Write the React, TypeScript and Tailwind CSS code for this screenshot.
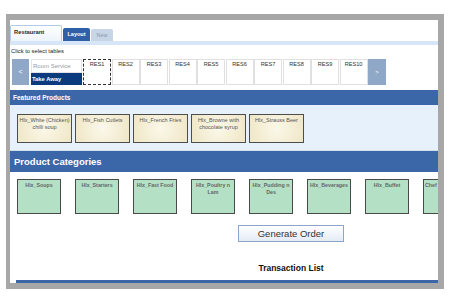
const tables = ["RES1", "RES2", "RES3", "RES4", "RES5", "RES6", "RES7", "RES8", "RES9", "RES10"];

const featured = [
  "Hlx_White (Chicken) chilli soup",
  "Hlx_Fish Cutlets",
  "Hlx_French Fries",
  "Hlx_Browne with chocolate syrup",
  "Hlx_Strauss Beer",
];

const categories = [
  "Hlx_Soups",
  "Hlx_Starters",
  "Hlx_Fast Food",
  "Hlx_Poultry n Lam",
  "Hlx_Pudding n Des",
  "Hlx_Beverages",
  "Hlx_Buffet",
];

export default function App() {
  return (
    <div className="h-[300px] w-[450px] overflow-hidden bg-white pl-[6px] pt-[14px] font-['Liberation_Sans',Arial,sans-serif]">
      <div className="flex h-[275px] w-[438px] flex-col overflow-hidden border-b-[6px] border-l-[4px] border-r-[6px] border-t-[6px] border-[#a7a7a7] bg-white">
        {/* Tabs */}
        <div className="flex h-[21px] shrink-0 items-end">
          <div className="h-[16px] w-[52px] rounded-t-[2px] border border-b-0 border-[#b3cbe8] bg-gradient-to-b from-white to-[#eef4fc] pl-[3px] pt-[3px] text-[5.8px] font-bold leading-[7px] text-[#2a2a2a]">
            Restaurant
          </div>
          <div className="ml-[1px] flex h-[13px] w-[27px] items-center justify-center rounded-t-[2px] bg-[#2f5fa6] text-[5.5px] font-bold text-white">
            Layout
          </div>
          <div className="ml-[1px] flex h-[12px] w-[22px] items-center justify-center rounded-t-[2px] bg-[#c8d5e6] text-[5.5px] text-[#8598b0]">
            New
          </div>
        </div>
        <div className="h-[4px] shrink-0 bg-[#d6e5f7]" />

        <div className="mt-[2px] pl-[1px] text-[5.8px] leading-[9px] text-[#222]">Click to select tables</div>

        {/* Tables row */}
        <div className="ml-[2px] mt-[3px] flex h-[26px] shrink-0">
          <div className="flex w-[17px] items-center justify-center bg-[#8fa8c8] text-[7px] text-white">&lt;</div>
          <div className="ml-[2px] flex w-[51px] flex-col">
            <div className="h-[14px] border border-[#e3e3e3] pl-[1px] text-[6px] leading-[12px] text-[#9a9a9a]">
              Room Service
            </div>
            <div className="h-[12px] bg-[#0b3b7e] pl-[1px] text-[5.8px] font-bold leading-[12px] text-white">
              Take Away
            </div>
          </div>
          <div className="ml-[1px] flex">
            {tables.map((t, i) => (
              <div
                key={t}
                className={
                  i === 0
                    ? "mr-[0.5px] w-[28px] border border-dashed border-[#333] pt-[1px] text-center text-[5.6px] leading-[6px] text-[#333]"
                    : "mr-[0.5px] w-[28px] border border-[#e0e0e0] pt-[1px] text-center text-[5.6px] leading-[6px] text-[#333]"
                }
              >
                {t}
              </div>
            ))}
          </div>
          <div className="flex w-[18px] items-center justify-center bg-[#8fa8c8] text-[6px] text-white">&gt;</div>
        </div>

        {/* Featured products */}
        <div className="mt-[5px] h-[15px] shrink-0 bg-[#3b67a9] pl-[3px] text-[6.5px] font-bold leading-[15px] text-white">
          Featured Products
        </div>
        <div className="flex h-[46px] shrink-0 gap-[3px] border-b border-[#d3deec] bg-[#e7f1fc] pl-[7px] pt-[9px]">
          {featured.map((f) => (
            <div
              key={f}
              className="h-[29px] w-[55px] shrink-0 overflow-hidden border-[1.5px] border-[#4d4d4d] bg-[radial-gradient(circle,#fbf8e9,#efe6c6)] px-[1px] pt-[2px] text-center text-[5.5px] leading-[6.5px] text-[#555]"
            >
              {f}
            </div>
          ))}
        </div>

        {/* Product categories */}
        <div className="h-[21px] shrink-0 bg-[#3b67a9] pl-[4px] text-[9.5px] font-bold leading-[21px] text-white">
          Product Categories
        </div>
        <div className="flex shrink-0 gap-[14px] overflow-hidden pl-[7px] pt-[7px]">
          {categories.map((c) => (
            <div
              key={c}
              className="h-[35px] w-[44px] shrink-0 overflow-hidden border-[1.5px] border-[#4a4a4a] bg-[#b4e1c6] px-[1px] pt-[2px] text-center text-[5.3px] font-bold leading-[6.5px] text-[#666]"
            >
              {c}
            </div>
          ))}
          <div className="h-[35px] w-[44px] shrink-0 overflow-hidden border-[1.5px] border-[#4a4a4a] bg-[#b4e1c6] pl-[1px] pt-[2px] text-left text-[5.3px] font-bold leading-[6.5px] text-[#666]">
            Chef
          </div>
        </div>

        {/* Order */}
        <button className="ml-[228px] mt-[11px] h-[17px] w-[106px] shrink-0 border border-[#8ca5c9] bg-gradient-to-b from-white to-[#e4ebf5] text-[9.5px] leading-[15px] text-[#333]">
          Generate Order
        </button>
        <div className="ml-[228px] mt-[21px] w-[106px] text-center text-[8.5px] font-bold leading-[10px] text-[#111]">
          Transaction List
        </div>

        <div className="ml-[6px] mt-auto h-[3px] shrink-0 bg-[#3b67a9]" />
      </div>
    </div>
  );
}
